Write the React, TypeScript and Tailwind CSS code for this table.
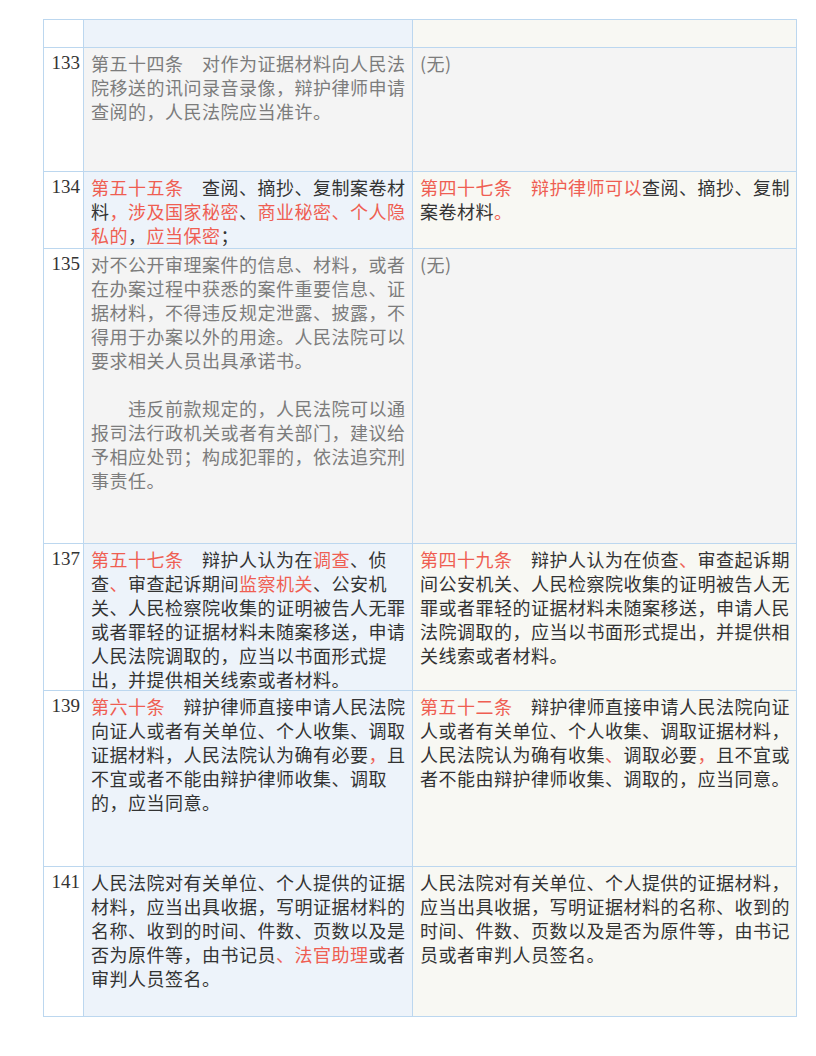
import React from "react";

type Seg = [string, "r" | "d" | "g"];

const tone: Record<string, string> = {
  r: "text-[#ef5e52]",
  d: "text-[#333333]",
  g: "text-[#7c7c7c]",
};

function Text({ parts }: { parts: Seg[][] }) {
  return (
    <>
      {parts.map((p, i) => (
        <p key={i} className={i > 0 ? "mt-[24px]" : ""}>
          {p.map(([t, c], j) => (
            <span key={j} className={tone[c]}>
              {t}
            </span>
          ))}
        </p>
      ))}
    </>
  );
}

type Row = {
  no: string;
  h: string;
  gray?: boolean;
  left: Seg[][];
  right: Seg[][];
};

const rows: Row[] = [
  {
    no: "133",
    h: "h-[124px]",
    gray: true,
    left: [[["第五十四条　对作为证据材料向人民法院移送的讯问录音录像，辩护律师申请查阅的，人民法院应当准许。", "g"]]],
    right: [[["(无)", "g"]]],
  },
  {
    no: "134",
    h: "h-[77px]",
    left: [
      [
        ["第五十五条", "r"],
        ["　查阅、摘抄、复制案卷材料", "d"],
        ["，涉及国家秘密", "r"],
        ["、", "d"],
        ["商业秘密、个人隐私的", "r"],
        ["，", "d"],
        ["应当保密", "r"],
        ["；", "d"],
      ],
    ],
    right: [
      [
        ["第四十七条　辩护律师可以", "r"],
        ["查阅、摘抄、复制案卷材料", "d"],
        ["。", "r"],
      ],
    ],
  },
  {
    no: "135",
    h: "h-[295px]",
    gray: true,
    left: [
      [["对不公开审理案件的信息、材料，或者在办案过程中获悉的案件重要信息、证据材料，不得违反规定泄露、披露，不得用于办案以外的用途。人民法院可以要求相关人员出具承诺书。", "g"]],
      [["　　违反前款规定的，人民法院可以通报司法行政机关或者有关部门，建议给予相应处罚；构成犯罪的，依法追究刑事责任。", "g"]],
    ],
    right: [[["(无)", "g"]]],
  },
  {
    no: "137",
    h: "h-[147px]",
    left: [
      [
        ["第五十七条", "r"],
        ["　辩护人认为在", "d"],
        ["调查", "r"],
        ["、侦查", "d"],
        ["、", "r"],
        ["审查起诉期间", "d"],
        ["监察机关", "r"],
        ["、公安机关、人民检察院收集的证明被告人无罪或者罪轻的证据材料未随案移送，申请人民法院调取的，应当以书面形式提出，并提供相关线索或者材料。", "d"],
      ],
    ],
    right: [
      [
        ["第四十九条", "r"],
        ["　辩护人认为在侦查", "d"],
        ["、", "r"],
        ["审查起诉期间公安机关、人民检察院收集的证明被告人无罪或者罪轻的证据材料未随案移送，申请人民法院调取的，应当以书面形式提出，并提供相关线索或者材料。", "d"],
      ],
    ],
  },
  {
    no: "139",
    h: "h-[176px]",
    left: [
      [
        ["第六十条", "r"],
        ["　辩护律师直接申请人民法院向证人或者有关单位、个人收集、调取证据材料，人民法院认为确有必要", "d"],
        ["，", "r"],
        ["且不宜或者不能由辩护律师收集、调取的，应当同意。", "d"],
      ],
    ],
    right: [
      [
        ["第五十二条", "r"],
        ["　辩护律师直接申请人民法院向证人或者有关单位、个人收集、调取证据材料，人民法院认为确有收集", "d"],
        ["、", "r"],
        ["调取必要", "d"],
        ["，", "r"],
        ["且不宜或者不能由辩护律师收集、调取的，应当同意。", "d"],
      ],
    ],
  },
  {
    no: "141",
    h: "h-[150px]",
    left: [
      [
        ["人民法院对有关单位、个人提供的证据材料，应当出具收据，写明证据材料的名称、收到的时间、件数、页数以及是否为原件等，由书记员", "d"],
        ["、法官助理", "r"],
        ["或者审判人员签名。", "d"],
      ],
    ],
    right: [
      [["人民法院对有关单位、个人提供的证据材料，应当出具收据，写明证据材料的名称、收到的时间、件数、页数以及是否为原件等，由书记员或者审判人员签名。", "d"]],
    ],
  },
];

export default function App() {
  return (
    <div className="min-h-[1056px] w-[816px] bg-white pt-[19px] pl-[43px]">
      <div
        className="w-[754px] border-l border-t border-[#bcd7ef] text-[18px] leading-[24px] tracking-[0.5px]"
        style={{ fontFamily: '"Noto Sans CJK SC", "Liberation Sans", sans-serif' }}
      >
        {/* header row */}
        <div className="flex h-[28px]">
          <div className="w-[40px] shrink-0 border-r border-b border-[#bcd7ef] bg-white" />
          <div className="w-[329px] shrink-0 border-r border-b border-[#bcd7ef] bg-[#edf3fa]" />
          <div className="w-[384px] shrink-0 border-r border-b border-[#bcd7ef] bg-[#f8f8f3]" />
        </div>

        {rows.map((row) => (
          <div key={row.no} className={`flex ${row.h}`}>
            <div
              className="w-[40px] shrink-0 border-r border-b border-[#bcd7ef] bg-white pt-[3px] pr-[3px] text-right text-[19px] leading-[24px] tracking-normal text-[#333333]"
              style={{ fontFamily: '"Liberation Serif", serif' }}
            >
              {row.no}
            </div>
            <div
              className={`w-[329px] shrink-0 border-r border-b border-[#bcd7ef] pt-[3px] pl-[7px] pr-[3px] ${
                row.gray ? "bg-[#f4f4f4]" : "bg-[#edf3fa]"
              }`}
            >
              <Text parts={row.left} />
            </div>
            <div
              className={`w-[384px] shrink-0 border-r border-b border-[#bcd7ef] pt-[3px] pl-[7px] pr-[3px] ${
                row.gray ? "bg-[#f4f4f4]" : "bg-[#f8f8f3]"
              }`}
            >
              <Text parts={row.right} />
            </div>
          </div>
        ))}
      </div>
    </div>
  );
}
